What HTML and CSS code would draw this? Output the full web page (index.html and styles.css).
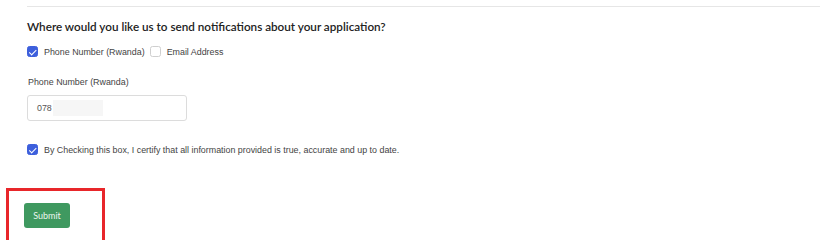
FILE: index.html
```html
<!DOCTYPE html>
<html lang="en">
<head>
  <meta charset="UTF-8" />
  <title>Notifications</title>
  <link rel="stylesheet" href="styles.css">
</head>
<body>
  <div class="form">
    <hr class="rule" />

    <h3 class="title">Where would you like us to send notifications about your application?</h3>

    <div class="choices">
      <label class="check"><span class="box on"></span>Phone Number (Rwanda)</label>
      <label class="check"><span class="box"></span>Email Address</label>
    </div>

    <div class="field">
      <p class="label">Phone Number (Rwanda)</p>
      <div class="input"><span>078</span><span class="mask"></span></div>
    </div>

    <label class="check agree"><span class="box on"></span>By Checking this box, I certify that all information provided is true, accurate and up to date.</label>
  </div>

  <div class="highlight">
    <button class="submit">Submit</button>
  </div>
</body>
</html>
```

FILE: styles.css
```css
* { margin: 0; padding: 0; box-sizing: border-box; }

body {
  background: #fff;
  color: #333;
  font-family: "Liberation Sans", Arial, sans-serif;
  width: 836px;
  height: 240px;
  overflow: hidden;
}

.form {
  padding: 0 16px 0 27px;
}

.rule {
  border: 0;
  border-top: 1.5px solid #e6e6e6;
  margin-top: 6px;
  width: 793px;
}

.title {
  font-family: "Lato", sans-serif;
  font-size: 11.7px;
  font-weight: 600;
  color: #222;
  margin-top: 12px;
}

.choices {
  display: flex;
  gap: 5px;
  margin-top: 13px;
}

.check {
  display: flex;
  align-items: center;
  gap: 6px;
  font-size: 8.9px;
  color: #444;
}

.box {
  width: 11px;
  height: 11px;
  border: 1px solid #cfcfcf;
  border-radius: 2.5px;
  background: #fff;
  position: relative;
  flex: none;
}
.box.on {
  background: #3d5fdc;
  border-color: #3d5fdc;
}
.box.on::after {
  content: "";
  position: absolute;
  left: 3.3px;
  top: 1px;
  width: 2.5px;
  height: 5.5px;
  border: solid #fff;
  border-width: 0 1.3px 1.3px 0;
  transform: rotate(45deg);
}

.field { margin-top: 20px; }

.label {
  font-size: 8.9px;
  color: #444;
  margin-left: 1px;
}

.input {
  margin-top: 8px;
  width: 160px;
  height: 26px;
  border: 1px solid #dcdcdc;
  border-radius: 3px;
  display: flex;
  align-items: center;
  padding-left: 9px;
  font-size: 8.9px;
  color: #555;
}
.mask {
  width: 50px;
  height: 16px;
  background: #f6f6f6;
  margin-left: 1px;
}

.agree { margin-top: 23px; }

.highlight {
  margin: 33px 0 0 6px;
  width: 99px;
  height: 64px;
  border: 3px solid #e8262a;
  padding: 12px 0 0 15px;
}

.submit {
  width: 46px;
  height: 25px;
  background: #3f9960;
  color: #eaf5ee;
  border: 0;
  border-radius: 3px;
  font-family: "Lato", sans-serif;
  font-size: 9px;
}
```
